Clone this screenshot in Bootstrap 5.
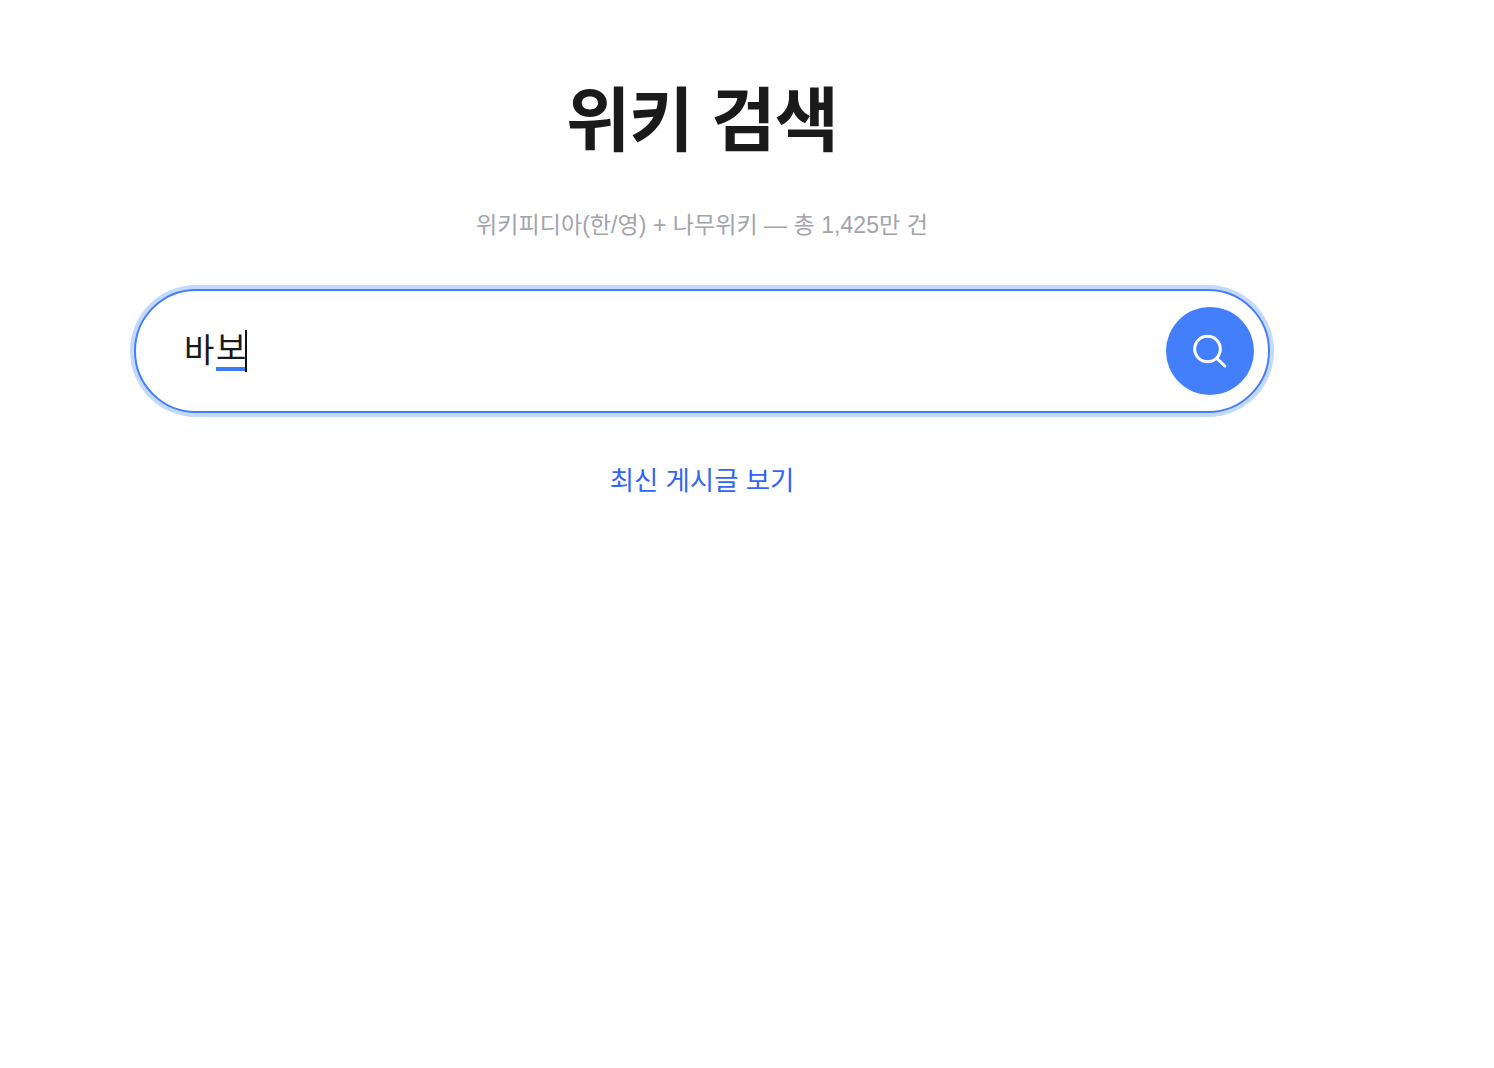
<!DOCTYPE html>
<html lang="ko">
<head>
<meta charset="utf-8">
<title>위키 검색</title>
<link href="https://cdn.jsdelivr.net/npm/bootstrap@5.3.0/dist/css/bootstrap.min.css" rel="stylesheet">
<style>
body { background:#fff; font-family:"Liberation Sans","Noto Sans CJK KR",sans-serif; color:#1a1a1a; }
.wiki-page { width:1404px; padding-top:79px; }
.wiki-title { font-size:70px; line-height:86px; font-weight:700; letter-spacing:-1px; margin:0 0 43px; color:#1a1a1a; }
.wiki-sub { font-size:23px; line-height:34px; color:#a3a3ad; margin:0 0 47px; letter-spacing:.05px; }
.wiki-pill { width:1136px; height:124px; border:2px solid #437ffb; border-radius:62px; box-shadow:0 0 0 4px #c3d9fd; padding:0 14px 0 48px; background:#fff; }
.wiki-input { font-size:33px; line-height:44px; color:#1a1a1a; }
.wiki-comp { border-bottom:4px solid #3b7bfb; line-height:36px; display:inline-block; height:40px; margin-left:1.5px; }
.wiki-caret { width:2px; height:42px; background:#111; margin-left:-1.5px; }
.wiki-btn { width:88px; height:88px; background:#437ffb; border:0; padding:0; }
.wiki-btn:hover { background:#437ffb; }
.wiki-link { font-size:26.4px; line-height:38px; color:#2f66f5; margin-top:49px; text-decoration:none; display:inline-block; }
</style>
</head>
<body>
<main class="wiki-page d-flex flex-column align-items-center text-center">
  <h1 class="wiki-title">위키 검색</h1>
  <p class="wiki-sub">위키피디아(한/영) + 나무위키 — 총 1,425만 건</p>
  <form class="wiki-pill d-flex align-items-center justify-content-between">
    <div class="wiki-input d-flex align-items-center" role="textbox"><span>바</span><span class="wiki-comp">보</span><span class="wiki-caret"></span></div>
    <button type="button" class="wiki-btn btn rounded-circle d-flex align-items-center justify-content-center" aria-label="검색">
      <svg width="40" height="40" viewBox="0 0 40 40" fill="none" stroke="#fff" stroke-width="3" stroke-linecap="round"><circle cx="17.5" cy="18" r="12.8"/><line x1="27" y1="27.6" x2="34.8" y2="35"/></svg>
    </button>
  </form>
  <a href="#" class="wiki-link">최신 게시글 보기</a>
</main>
</body>
</html>
